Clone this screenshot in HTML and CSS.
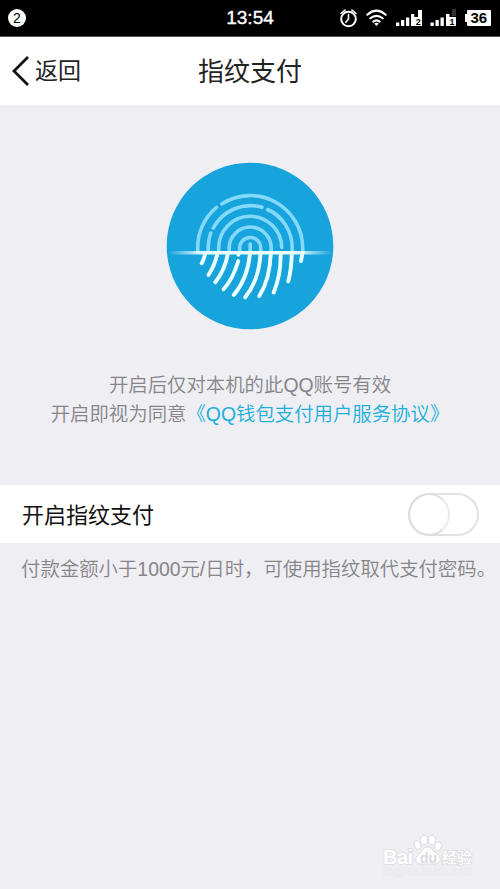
FILE: index.html
```html
<!DOCTYPE html>
<html lang="zh-CN">
<head>
<meta charset="utf-8">
<title>指纹支付</title>
<link rel="stylesheet" href="styles.css">
</head>
<body>
<div class="statusbar">
  <span class="count">2</span>
  <span class="clock">13:54</span>
  <svg class="signals" width="154" height="36" viewBox="0 0 154 36">
    <g fill="none" stroke="#fff" stroke-width="2" stroke-linecap="round">
      <circle cx="8.5" cy="19" r="7.3"/>
      <path d="M8.5 14.5V19l-2.7 3.2M1 13.5l4-3.4M16 13.5l-4-3.4" stroke-width="1.6"/>
      <path d="M27.3 14.7q9.2-8 18.4 0M30.3 18.3q6.2-5 12.4 0M33.3 21.7q3.2-2.5 6.400 0" stroke-width="2.1"/>
    </g>
    <path d="M34.2 23.6q2.3-1.5 4.6 0L36.5 26z" fill="#fff"/>
    <g fill="#fff">
      <path d="M56 22.500h3.300V26H56zM61 20h3.300v6H61zM66 17.500h3.300V26H66zM71 14h3.300v12H71zM78 10h4v16h-8v-9h4z"/>
      <path d="M90.500 22.500h3.300V26h-3.300zM95.500 20h3.300v6h-3.300zM100.500 17.500h3.300V26h-3.300zM106 14h3.500v3h6.500v9h-10z"/>
      <path d="M112 9h4v7h-4z" fill="#333"/>
      <path d="M128 10h22q1 0 1 1v14q0 1-1 1h-22q-1 0-1-1v-3h-2v-8h2v-3q0-1 1-1z"/>
    </g>
    <g class="mini"><text x="75.800" y="25" font-size="9">2</text><text x="109.500" y="25" font-size="9">1</text><text x="130.500" y="23.300" font-size="15">36</text></g>
  </svg>
</div>
<header class="nav">
  <svg class="chevron" width="18" height="32" viewBox="0 0 18 32"><path d="M16 2L2 16l14 14" fill="none" stroke="#111" stroke-width="2.800"/></svg>
  <span class="back">返回</span>
  <h1 class="title">指纹支付</h1>
</header>
<main>
  <section class="intro">
    <svg class="finger" width="180" height="180" viewBox="0 0 180 180">
      <defs>
        <linearGradient id="beam"><stop offset="0" stop-color="#fff" stop-opacity="0"/><stop offset=".22" stop-color="#e8fcff"/><stop offset=".78" stop-color="#e8fcff"/><stop offset="1" stop-color="#fff" stop-opacity="0"/></linearGradient>
      </defs>
      <circle cx="90" cy="91" r="83.300" fill="#17a3dc"/>
      <g fill="none" stroke="#82d9fa" stroke-width="3.600" stroke-linecap="round">
        <path d="M37.700 97V93A52.500 52.500 0 0 1 56.500 52.300M61.800 48.900A52.500 52.500 0 0 1 142.700 93V97"/>
        <path d="M48.200 97V93A42 42 0 0 1 50.700 78M53.300 73A42 42 0 0 1 102 52.300M107.700 54.500A42 42 0 0 1 132.200 93V97"/>
        <path d="M58.700 97V93A31.500 31.500 0 0 1 121.700 92.500"/>
        <path d="M69.200 97V93A21 21 0 0 1 111.200 93V97"/>
        <path d="M79.700 97V93A10.500 10.500 0 0 1 100.700 93V97M90.200 89V97"/>
      </g>
      <g fill="none" stroke="#eaffff" stroke-width="3.900" stroke-linecap="round">
        <path d="M45.200 98Q44.500 103 41.700 108.300"/>
        <path d="M57.500 98Q55 110 48.500 120"/>
        <path d="M68 98Q65 115 55.300 127.300"/>
        <path d="M78.300 106Q73 124 63.500 134.300"/>
        <path d="M78.400 98v1.800"/>
        <path d="M90 98Q88 123 73.800 140"/>
        <path d="M100.500 98Q99.500 124 85.200 142.300"/>
        <path d="M110.800 98Q110 124 99.300 141"/>
        <path d="M120.700 98Q121 120 113.700 137.500"/>
        <path d="M131.800 98Q131.500 114 128.300 126.300"/>
        <path d="M142.500 98L141 106"/>
      </g>
      <path d="M8 96h164v3.600H8z" fill="url(#beam)"/>
    </svg>
    <p class="terms">开启后仅对本机的此QQ账号有效<br>开启即视为同意<a class="link">《QQ钱包支付用户服务协议》</a></p>
  </section>
  <section class="setting">
    <span class="label">开启指纹支付</span>
    <span class="switch"><span class="knob"></span></span>
  </section>
  <p class="note">付款金额小于1000元/日时，可使用指纹取代支付密码。</p>
</main>
<footer class="watermark">
  <svg width="100" height="50" viewBox="0 0 100 50">
    <g fill="#fff" stroke="#dddde1" stroke-width="1">
      <ellipse cx="37.500" cy="15" rx="3.200" ry="4.500" transform="rotate(-20 37.500 15)"/>
      <ellipse cx="44" cy="10" rx="3.400" ry="4.700"/>
      <ellipse cx="52" cy="10" rx="3.400" ry="4.700"/>
      <ellipse cx="58" cy="16.500" rx="3.200" ry="4.500" transform="rotate(20 58 16.500)"/>
      <path d="M47.500 17c-4 0-5 4-8.500 7-6 5-3 11 4 10h10c7 1 10-5 4-10-4-3-5-7-9.500-7z"/>
      <text class="brand" x="3" y="33.500" font-size="20" textLength="30">Bai</text>
      <text class="cn" x="62" y="33" font-size="15" textLength="30">经验</text>
    </g>
    <text class="du" x="40" y="33" font-size="14">du</text>
    <text class="url" x="3" y="45" font-size="10" textLength="89">jingyan.baidu.com</text>
  </svg>
</footer>
</body>
</html>
```

FILE: styles.css
```css
* { box-sizing: border-box; }
body {
  margin: 0;
  width: 500px;
  height: 889px;
  display: flex;
  flex-direction: column;
  overflow: hidden;
  background: #eeeef3;
  font-family: "Liberation Sans", "Noto Sans CJK SC", sans-serif;
}
p, h1 { margin: 0; font-weight: 400; }
.statusbar {
  height: 37px;
  flex: none;
  display: grid;
  grid-template-columns: 1fr auto 1fr;
  align-items: center;
  padding: 0 6px 1px;
  background: #000;
  border-bottom: 1px solid #555;
  color: #fff;
}
.count {
  width: 18px;
  height: 18px;
  margin-left: 2px;
  border-radius: 50%;
  background: #fff;
  color: #000;
  font: 14px/18px "Liberation Sans", sans-serif;
  text-align: center;
}
.clock { font-size: 19px; -webkit-text-stroke: .35px #fff; }
.signals { justify-self: end; }
.mini { font-family: "Liberation Sans", sans-serif; font-weight: 700; }
.nav {
  height: 68px;
  flex: none;
  display: grid;
  grid-template-columns: 18px 150px auto;
  column-gap: 5px;
  align-items: center;
  padding-left: 12px;
  background: #fff;
  color: #222;
}
.back { font-size: 23px; line-height: 34px; }
.title { font-size: 26px; line-height: 38px; margin: 2px 0 0 8px; }
.intro {
  height: 380px;
  display: flex;
  flex-direction: column;
  align-items: center;
  padding-top: 50px;
}
.finger { flex: none; }
.terms {
  margin-top: 36px;
  font-size: 19.4px;
  font-weight: 350;
  line-height: 29px;
  text-align: center;
  white-space: nowrap;
  color: #858589;
}
.link { color: #20aedb; }
.setting {
  height: 58px;
  display: flex;
  align-items: center;
  justify-content: space-between;
  padding: 0 21px 0 22px;
  background: #fff;
  color: #111;
  font-size: 22px;
}
.label { padding-bottom: 3px; }
.switch {
  width: 71px;
  height: 43px;
  border: 2px solid #e2e2e3;
  border-radius: 22px;
  background: #fff;
}
.knob {
  display: block;
  width: 42px;
  height: 43px;
  margin: -2px 0 0 -2px;
  border: 2px solid #dedee0;
  border-right-color: #eaeaeb;
  border-radius: 50%;
}
.note {
  padding: 11px 0 0 21px;
  font-size: 19.4px;
  font-weight: 350;
  line-height: 30px;
  white-space: nowrap;
  color: #858589;
}
.watermark { margin-top: auto; height: 59px; padding-left: 380px; }
.brand, .cn { paint-order: stroke; stroke-width: 1.6px; }
.brand { font-weight: 700; }
.cn { font-family: "Noto Sans CJK SC", sans-serif; font-weight: 500; }
.du { font-weight: 700; fill: #d9d9de; }
.url { fill: #f8f8fb; stroke: #e2e2e6; stroke-width: .3px; }
```
